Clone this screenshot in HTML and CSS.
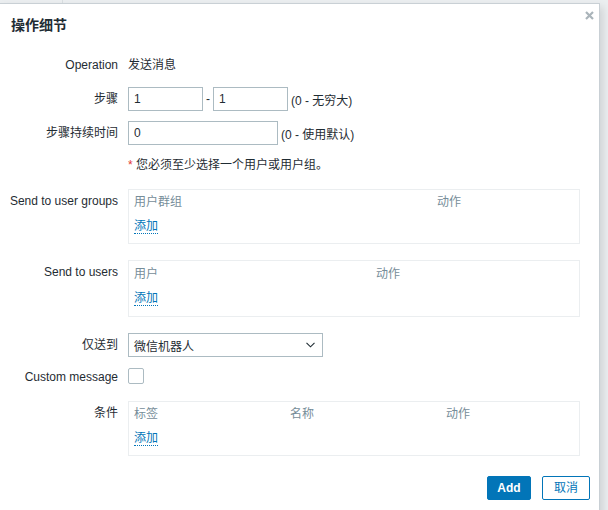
FILE: index.html
```html
<!DOCTYPE html>
<html lang="zh">
<head>
<meta charset="utf-8">
<title>操作细节</title>
<link rel="stylesheet" href="styles.css">
</head>
<body>
<div class="dialog">
  <div class="head">
    <h4 class="title">操作细节</h4>
    <button class="close" type="button" aria-label="Close">
      <svg width="9" height="9" viewBox="0 0 9 9"><path d="M1 1 L8 8 M8 1 L1 8" stroke="#aab4ba" stroke-width="2.2" fill="none"/></svg>
    </button>
  </div>
  <form class="form">
    <div class="label">Operation</div>
    <div class="field text">发送消息</div>

    <div class="label">步骤</div>
    <div class="field inline">
      <input class="input input-sm" type="text" value="1">
      <span class="dash">-</span>
      <input class="input input-sm" type="text" value="1">
      <span class="hint">(0 - 无穷大)</span>
    </div>

    <div class="label">步骤持续时间</div>
    <div class="field inline">
      <input class="input input-md" type="text" value="0">
      <span class="hint">(0 - 使用默认)</span>
    </div>

    <div class="label"></div>
    <div class="field note"><span class="req">*</span> 您必须至少选择一个用户或用户组。</div>

    <div class="label">Send to user groups</div>
    <div class="field spaced">
      <div class="box">
        <div class="thead"><span class="col col-groups">用户群组</span><span class="col">动作</span></div>
        <div class="trow"><a class="link" href="#">添加</a></div>
      </div>
    </div>

    <div class="label">Send to users</div>
    <div class="field spaced">
      <div class="box box-tall">
        <div class="thead"><span class="col col-users">用户</span><span class="col">动作</span></div>
        <div class="trow"><a class="link" href="#">添加</a></div>
      </div>
    </div>

    <div class="label label-mid">仅送到</div>
    <div class="field">
      <div class="select"><span>微信机器人</span>
        <svg class="chev" width="9" height="6" viewBox="0 0 9 6"><polyline points="0.5,0.8 4.5,4.8 8.5,0.8" fill="none" stroke="#1f2c33" stroke-width="1.1"/></svg>
      </div>
    </div>

    <div class="label label-cb">Custom message</div>
    <div class="field"><span class="checkbox"></span></div>

    <div class="label">条件</div>
    <div class="field">
      <div class="box">
        <div class="thead"><span class="col col-cond">标签</span><span class="col col-cond">名称</span><span class="col">动作</span></div>
        <div class="trow"><a class="link" href="#">添加</a></div>
      </div>
    </div>
  </form>
  <div class="foot">
    <button class="btn btn-primary" type="button">Add</button>
    <button class="btn btn-alt" type="button">取消</button>
  </div>
</div>
</body>
</html>
```
FILE: styles.css
```css
html, body {
  margin: 0;
  padding: 0;
}
body {
  height: 510px;
  overflow: hidden;
  background-color: #ebeef0;
  background-image: linear-gradient(to right, transparent 62px, #d9dee1 62px, #d9dee1 63px, transparent 63px);
  font-family: "Liberation Sans", "Noto Sans CJK SC", Arial, sans-serif;
  font-size: 12px;
  color: #1f2c33;
}
.dialog {
  position: relative;
  box-sizing: border-box;
  margin-top: 3px;
  margin-left: -1px;
  width: 601px;
  height: 520px;
  background: #fff;
  border: 1px solid #c9d0d5;
  box-shadow: 3px 4px 8px rgba(0, 0, 0, 0.12);
}
.head {
  box-sizing: border-box;
  height: 49px;
  padding: 12px 10px 0 11px;
}
.title {
  margin: 0;
  font-size: 14px;
  line-height: 18px;
  font-weight: bold;
  color: #1f2c33;
}
.close {
  position: absolute;
  top: 7px;
  right: 5px;
  width: 9px;
  height: 9px;
  padding: 0;
  border: 0;
  background: none;
  line-height: 0;
}
.form {
  display: grid;
  grid-template-columns: 118px 452px;
  column-gap: 10px;
  row-gap: 10px;
  margin: 0;
}
.label {
  text-align: right;
  line-height: 24px;
  white-space: nowrap;
}
.label-mid {
  line-height: 24px;
}
.label-cb {
  line-height: 20px;
}
.field {
  min-height: 24px;
}
.text {
  line-height: 24px;
}
.inline {
  display: flex;
  align-items: center;
}
.input {
  box-sizing: border-box;
  height: 24px;
  margin: 0;
  padding: 0 5px;
  border: 1px solid #acbbc2;
  border-radius: 0;
  font-family: inherit;
  font-size: 12px;
  color: #1f2c33;
  background: #fff;
}
.input-sm {
  width: 75px;
}
.input-md {
  width: 150px;
}
.dash {
  width: 10px;
  text-align: center;
}
.hint {
  margin-left: 3px;
}
.note {
  box-sizing: border-box;
  height: 24px;
  overflow: hidden;
  line-height: 20px;
  padding-bottom: 4px;
}
.req {
  color: #e33734;
}
.spaced {
  margin-bottom: 6px;
}
.box {
  box-sizing: border-box;
  width: 452px;
  height: 55px;
  padding: 0 5px;
  border: 1px solid #ebeef0;
}
.box-tall {
  height: 57px;
}
.box-tall .thead {
  padding-top: 1px;
}
.thead {
  display: flex;
  line-height: 24px;
  color: #768d99;
}
.col-groups {
  width: 303px;
}
.col-users {
  width: 242px;
}
.col-cond {
  width: 156px;
}
.trow {
  line-height: 24px;
}
.link {
  color: #0275b8;
  text-decoration: none;
  border-bottom: 1px dotted #0275b8;
}
.select {
  box-sizing: border-box;
  display: flex;
  align-items: center;
  justify-content: space-between;
  width: 195px;
  height: 24px;
  padding: 0 7px 0 5px;
  border: 1px solid #acbbc2;
  background: #fff;
}
.chev {
  display: block;
}
.checkbox {
  display: block;
  box-sizing: border-box;
  width: 16px;
  height: 16px;
  margin-top: 1px;
  border: 1px solid #acbbc2;
  border-radius: 2px;
  background: #fff;
}
.foot {
  display: flex;
  justify-content: flex-end;
  gap: 11px;
  padding: 20px 9px 0 0;
}
.btn {
  box-sizing: border-box;
  height: 24px;
  padding: 0;
  border: 1px solid #0275b8;
  border-radius: 2px;
  font-family: inherit;
  font-size: 12px;
  line-height: 22px;
  text-align: center;
}
.btn-primary {
  width: 44px;
  background: #0275b8;
  color: #fff;
  font-weight: bold;
}
.btn-alt {
  width: 48px;
  background: #fff;
  color: #0275b8;
}
```
